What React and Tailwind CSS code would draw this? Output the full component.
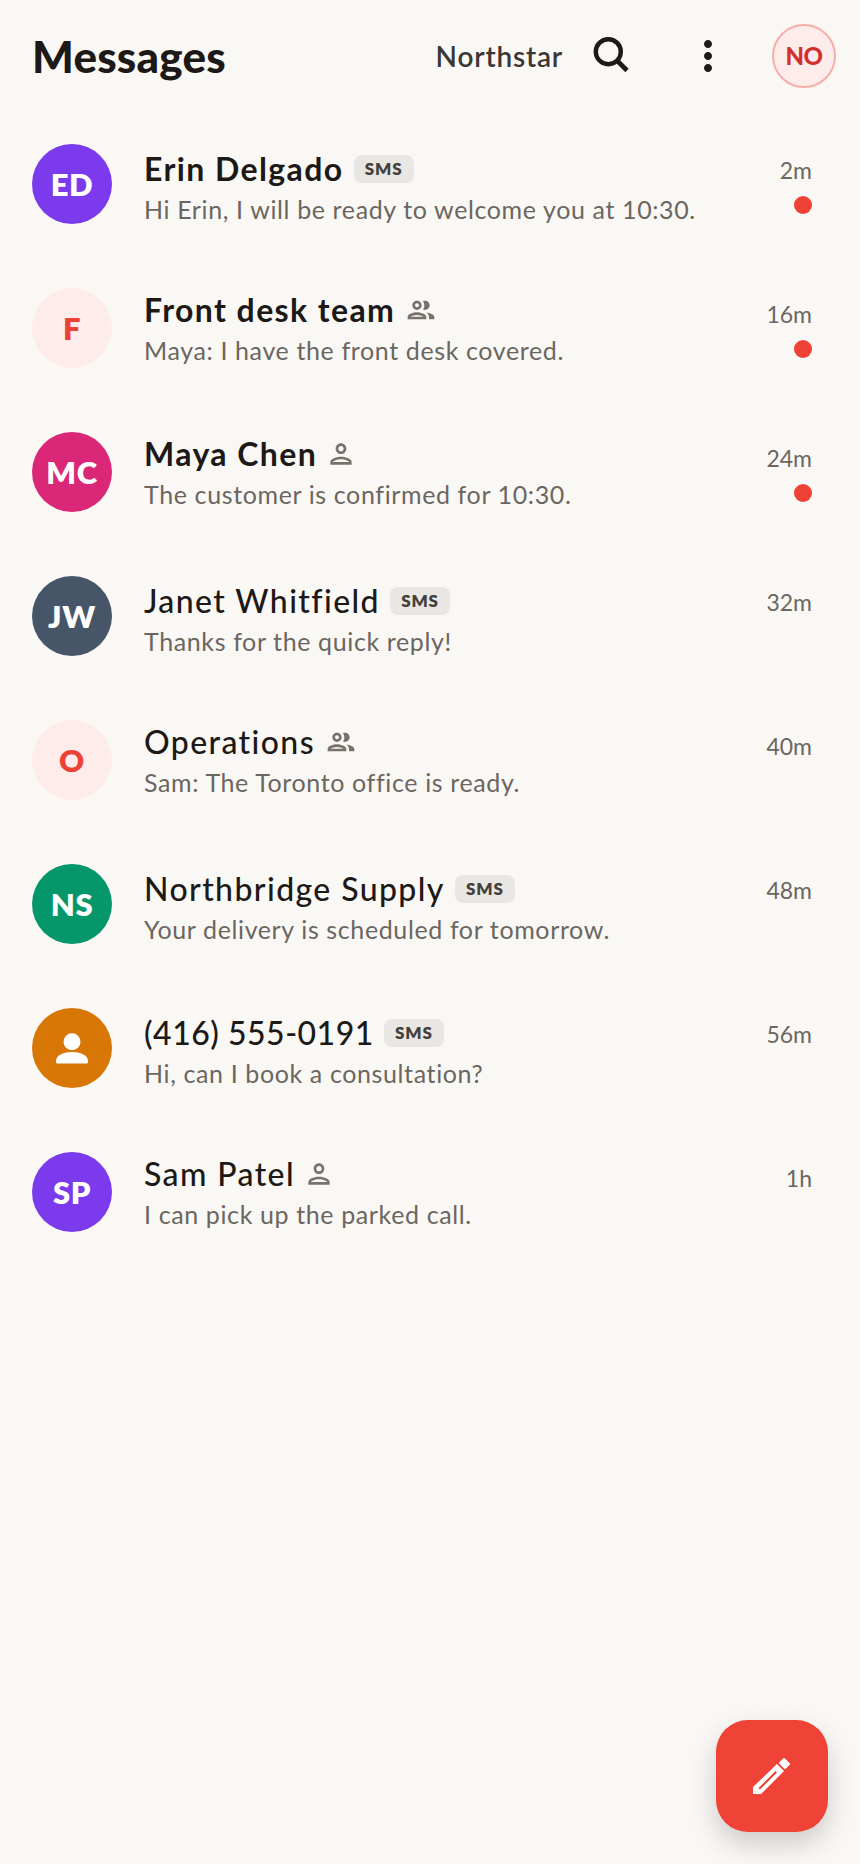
import { MdMoreVert, MdOutlinePerson, MdOutlinePeople } from "react-icons/md";

const threads = [
  { id: 1, name: "Erin Delgado", preview: "Hi Erin, I will be ready to welcome you at 10:30.", time: "2m", initials: "ED", avatar: "bg-[#7c3aed] text-white", tag: "sms", unread: true },
  { id: 2, name: "Front desk team", preview: "Maya: I have the front desk covered.", time: "16m", initials: "F", avatar: "bg-[#feeceb] text-[#ea4335]", tag: "group", unread: true },
  { id: 3, name: "Maya Chen", preview: "The customer is confirmed for 10:30.", time: "24m", initials: "MC", avatar: "bg-[#db2777] text-white", tag: "person", unread: true },
  { id: 4, name: "Janet Whitfield", preview: "Thanks for the quick reply!", time: "32m", initials: "JW", avatar: "bg-[#475569] text-white", tag: "sms" },
  { id: 5, name: "Operations", preview: "Sam: The Toronto office is ready.", time: "40m", initials: "O", avatar: "bg-[#feeceb] text-[#ea4335]", tag: "group" },
  { id: 6, name: "Northbridge Supply", preview: "Your delivery is scheduled for tomorrow.", time: "48m", initials: "NS", avatar: "bg-[#059669] text-white", tag: "sms" },
  { id: 7, name: "(416) 555-0191", preview: "Hi, can I book a consultation?", time: "56m", avatar: "bg-[#d97706] text-white", tag: "sms", narrow: true },
  { id: 8, name: "Sam Patel", preview: "I can pick up the parked call.", time: "1h", initials: "SP", avatar: "bg-[#7c3aed] text-white", tag: "person" },
];

function Tag({ type }) {
  if (type === "sms") {
    return (
      <span className="flex h-7 w-[60px] items-center justify-center rounded-lg bg-[#e9e7e3] text-[17px] font-extrabold tracking-[0.05em] text-[#44403c]">
        SMS
      </span>
    );
  }
  if (type === "group") return <MdOutlinePeople className="h-8 w-8 text-[#78716c]" />;
  return <MdOutlinePerson className="-ml-0.5 h-8 w-8 text-[#78716c]" />;
}

function PersonGlyph() {
  return (
    <svg viewBox="0 0 48 48" className="h-12 w-12" fill="currentColor">
      <circle cx="24" cy="17.7" r="8.5" />
      <path d="M8 37C8 31 16 28 24 28C32 28 40 31 40 37V38A1.5 1.5 0 0 1 38.5 39.5H9.5A1.5 1.5 0 0 1 8 38Z" />
    </svg>
  );
}

function SearchGlyph() {
  return (
    <svg viewBox="0 0 48 48" className="ml-6 h-12 w-12 text-[#1c1917]" fill="none" stroke="currentColor">
      <circle cx="21.3" cy="19.7" r="12.5" strokeWidth="4.4" />
      <path d="M30.5 29L40 38.5" strokeWidth="4.6" />
    </svg>
  );
}

function ThreadRow({ thread }) {
  const isSms = thread.tag === "sms";
  return (
    <div className="flex h-36 items-center pl-8 pr-12">
      <div className={`flex h-20 w-20 shrink-0 items-center justify-center rounded-full text-[31px] font-extrabold tracking-[0.02em] ${thread.avatar}`}>
        {thread.initials || <PersonGlyph />}
      </div>
      <div className={`ml-8 h-[80px] min-w-0 flex-1 ${isSms ? "pt-[6px]" : "pt-[3px]"}`}>
        <div className="flex h-[38px] items-center gap-2.5">
          <span className={`text-[32px] leading-[38px] text-[#1c1917] ${thread.narrow ? "tracking-[0.5px]" : "tracking-[1.4px]"} ${thread.unread ? "font-bold" : "font-medium"}`}>{thread.name}</span>
          <Tag type={thread.tag} />
        </div>
        <div className="mt-[5px] text-[25px] leading-8 tracking-[0.62px] text-[#6b6660]">{thread.preview}</div>
      </div>
      <div className="flex h-[76px] w-14 shrink-0 flex-col items-end pt-[10px]">
        <span className="text-[23px] leading-7 text-[#6b6660]">{thread.time}</span>
        {thread.unread && <span className="mt-3 h-[18px] w-[18px] rounded-full bg-[#ef4136]" />}
      </div>
    </div>
  );
}

export default function App() {
  return (
    <div className="relative h-[1864px] w-[860px] overflow-hidden bg-[#faf8f5] font-['Lato',sans-serif]">
      <header className="flex h-28 items-center pl-8 pr-6">
        <h1 className="flex-1 text-[44px] font-black tracking-[0.2px] text-[#1c1917]">Messages</h1>
        <span className="text-[28px] font-semibold tracking-[0.8px] text-[#3a3734]">Northstar</span>
        <SearchGlyph />
        <MdMoreVert className="ml-[49px] h-12 w-12 text-[#1c1917]" />
        <div className="ml-10 flex h-16 w-16 items-center justify-center rounded-full border-2 border-[#f5aea8] bg-[#feeceb] text-2xl font-black tracking-[-0.02em] text-[#d32f2f]">
          NO
        </div>
      </header>
      <main>
        {threads.map((thread) => (
          <ThreadRow key={thread.id} thread={thread} />
        ))}
      </main>
      <button className="absolute bottom-8 right-8 flex h-28 w-28 items-center justify-center rounded-[32px] bg-[#f04338] shadow-[0_12px_28px_rgba(0,0,0,0.18)]">
        <svg viewBox="0 0 38 38" className="h-[38px] w-[38px]" fill="#fff">
          <path fillRule="evenodd" d="M0 37V30L24 7L31 14L8 37ZM5.5 31L22.5 14L24 15.5L7 32.5Z" />
          <path d="M27 6L31 2L36 7L32 11Z" stroke="#fff" strokeWidth="2" strokeLinejoin="round" />
        </svg>
      </button>
    </div>
  );
}
